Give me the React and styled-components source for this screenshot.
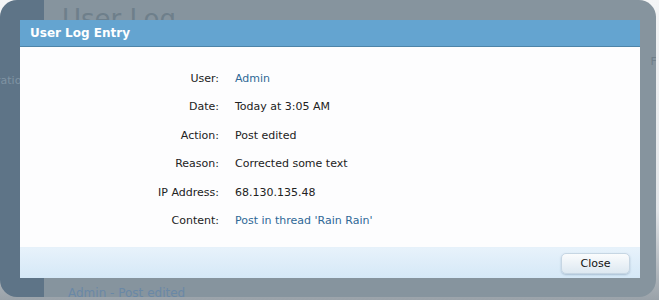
import React from "react";
import styled, { createGlobalStyle } from "styled-components";

const GlobalStyle = createGlobalStyle`
  html, body {
    margin: 0;
    padding: 0;
    background: #e4e7ea;
    font-family: "DejaVu Sans", "Liberation Sans", sans-serif;
  }
`;

const Page = styled.div`
  position: relative;
  width: 659px;
  height: 300px;
  overflow: hidden;
  background: linear-gradient(to bottom, #f4f5f6 0%, #e2e5e8 70%, #9aa2a9 100%);
`;

const Backdrop = styled.div`
  width: 656px;
  height: 297px;
  border-radius: 17px;
  overflow: hidden;
  display: flex;
`;

const Sidebar = styled.div`
  width: 44px;
  background: #5e7487;
  padding-top: 74px;
  box-sizing: border-box;
  color: #7e93a3;
  font-size: 11px;
  overflow: hidden;
  white-space: nowrap;
  text-indent: -4px;
`;

const Main = styled.div`
  flex: 1;
  background: #86949e;
  display: flex;
  flex-direction: column;
  justify-content: space-between;
  padding: 4px 0 0 18px;
  position: relative;
`;

const FadedHeading = styled.div`
  font-size: 26px;
  color: #6e7f8b;
  line-height: 30px;
`;

const FadedLink = styled.div`
  font-size: 12px;
  line-height: 14px;
  padding-left: 6px;
  margin-bottom: -3px;
  color: #6a88a6;
`;

const EdgeText = styled.span`
  position: absolute;
  right: -3px;
  top: 55px;
  font-size: 11px;
  color: #6f7e89;
`;

const Dialog = styled.div`
  position: absolute;
  left: 20px;
  top: 20px;
  width: 620px;
  height: 258px;
  display: flex;
  flex-direction: column;
  background: #fdfdfe;
`;

const Header = styled.div`
  height: 26px;
  background: #64a4d0;
  border-bottom: 1px solid #4d84a8;
  color: #ffffff;
  font-weight: bold;
  font-size: 12px;
  line-height: 26px;
  padding-left: 10px;
`;

const Body = styled.div`
  flex: 1;
  padding-top: 18px;
  display: grid;
  grid-template-columns: 199px 1fr;
  grid-auto-rows: 28.4px;
  column-gap: 16px;
  align-content: start;
  font-size: 11px;
  color: #222;
`;

const Label = styled.div`
  text-align: right;
  line-height: 28.4px;
`;

const Value = styled.div`
  line-height: 28.4px;
  color: ${(p) => (p.$link ? "#2f6896" : "#222")};
`;

const Footer = styled.div`
  height: 30px;
  border-top: 1px solid #e6f1fa;
  background: linear-gradient(to bottom, #e7f2fb, #d5e8f7);
  display: flex;
  align-items: center;
  justify-content: flex-end;
  padding-right: 10px;
`;

const Button = styled.button`
  width: 69px;
  height: 21px;
  border: 1px solid #c6d6e3;
  border-radius: 5px;
  background: linear-gradient(to bottom, #fafcfd, #dde8f1);
  box-shadow: 0 1px 2px rgba(80, 110, 140, 0.35);
  font-family: "DejaVu Sans", sans-serif;
  font-size: 11px;
  color: #111;
  padding: 0;
`;

const rows = [
  { label: "User:", value: "Admin", link: true },
  { label: "Date:", value: "Today at 3:05 AM" },
  { label: "Action:", value: "Post edited" },
  { label: "Reason:", value: "Corrected some text" },
  { label: "IP Address:", value: "68.130.135.48" },
  { label: "Content:", value: "Post in thread 'Rain Rain'", link: true },
];

export default function App() {
  return (
    <>
      <GlobalStyle />
      <Page>
        <Backdrop>
          <Sidebar>ration</Sidebar>
          <Main>
            <FadedHeading>User Log</FadedHeading>
            <FadedLink>Admin - Post edited</FadedLink>
            <EdgeText>Fi</EdgeText>
          </Main>
        </Backdrop>
        <Dialog>
          <Header>User Log Entry</Header>
          <Body>
            {rows.map((r) => (
              <React.Fragment key={r.label}>
                <Label>{r.label}</Label>
                <Value $link={r.link}>{r.value}</Value>
              </React.Fragment>
            ))}
          </Body>
          <Footer>
            <Button>Close</Button>
          </Footer>
        </Dialog>
      </Page>
    </>
  );
}
